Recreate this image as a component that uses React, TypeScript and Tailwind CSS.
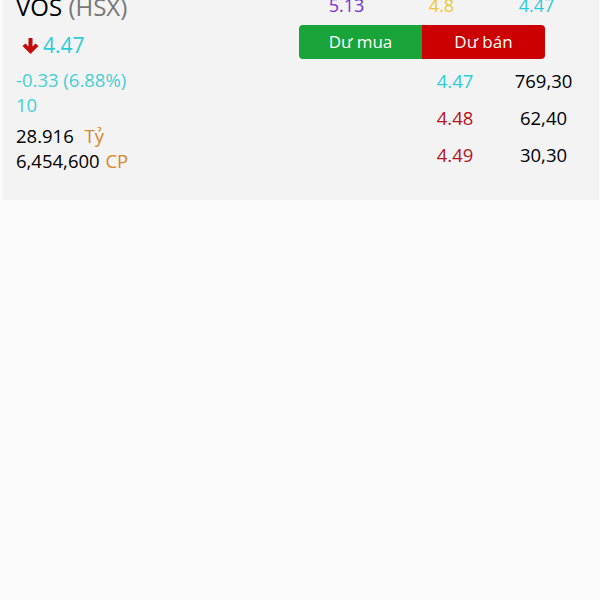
import React from "react";

export default function App() {
  const font = { fontFamily: '"Open Sans", "Noto Sans", sans-serif' };
  return (
    <div className="w-[600px] h-[600px] overflow-hidden bg-[#fafafa]" style={font}>
      <div className="w-[597px] h-[200px] bg-[#f3f3f3] border-l border-[#fbfbfb] ml-[2px] flex overflow-hidden">
        <div className="w-[296px] pl-[13px] flex flex-col -mt-[9px]">
          <div className="text-[24px] leading-[32px] text-black">
            VOS <span className="text-[#777777]">(HSX)</span>
          </div>
          <div className="flex items-center mt-[9px] h-[28px]">
            <svg width="19" height="16" viewBox="0 0 18 16" className="ml-[5px] mr-[3px]">
              <path d="M9 16 L1 8 L4 5.5 L7 8.5 L7 0 L11 0 L11 8.5 L14 5.5 L17 8 Z" fill="#c40a0a" />
            </svg>
            <span className="text-[21px] text-[#2ccdd8]">4.47</span>
          </div>
          <div className="text-[18.5px] leading-[25px] text-[#45cfd6] mt-[7px]">-0.33 (6.88%)</div>
          <div className="text-[18.5px] leading-[25px] text-[#45cfd6]">10</div>
          <div className="text-[18.5px] leading-[25px] text-black mt-[6px]">
            28.916 <span className="text-[#d9862a] ml-[6px]">Tỷ</span>
          </div>
          <div className="text-[18.5px] leading-[25px] text-black">
            6,454,600 <span className="text-[#d9862a] ml-[1px]">CP</span>
          </div>
        </div>
        <div className="flex flex-col">
          <div className="flex w-[285px] -mt-[7px] text-[18px] leading-[24px]">
            <div className="w-[95px] text-center text-[#7a2ed6]">5.13</div>
            <div className="w-[95px] text-center text-[#f0c72a]">4.8</div>
            <div className="w-[95px] text-center text-[#2ccdd8]">4.47</div>
          </div>
          <div className="flex mt-[8px] h-[34px] w-[246px] rounded-[4px] overflow-hidden text-white text-[17px]">
            <div className="w-[123px] bg-[#19a43a] flex items-center justify-center">Dư mua</div>
            <div className="w-[123px] bg-[#cc0000] flex items-center justify-center">Dư bán</div>
          </div>
          <div className="flex flex-col mt-[3px] text-[18.5px]">
            {[
              ["4.47", "769,30", "text-[#2ccdd8]"],
              ["4.48", "62,40", "text-[#b3141e]"],
              ["4.49", "30,30", "text-[#b3141e]"],
            ].map(([p, v, c]) => (
              <div key={p} className="flex h-[37px] items-center">
                <div className="w-[121px]" />
                <div className={`w-[70px] text-center ${c}`}>{p}</div>
                <div className="w-[107px] text-center text-black">{v}</div>
              </div>
            ))}
          </div>
        </div>
      </div>
    </div>
  );
}
